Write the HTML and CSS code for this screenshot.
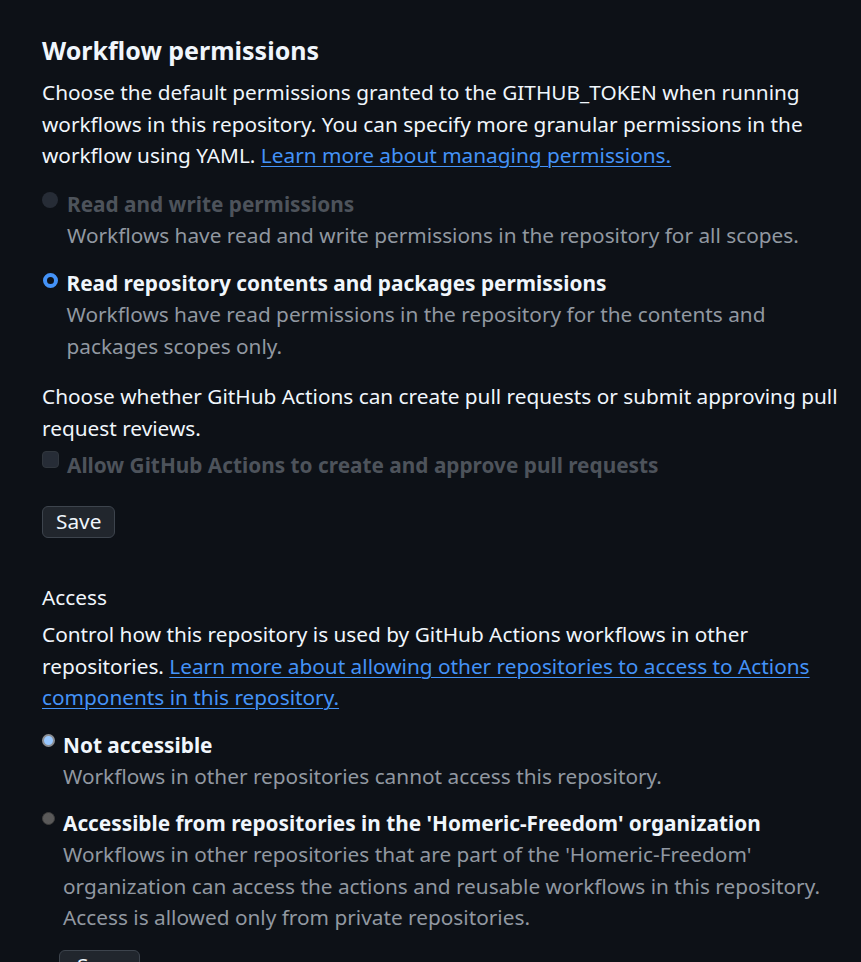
FILE: index.html
```html
<!DOCTYPE html>
<html lang="en">
<head>
<meta charset="utf-8">
<title>Workflow permissions</title>
<link rel="stylesheet" href="styles.css">
</head>
<body>
<main class="page">
  <h2 class="title">Workflow permissions</h2>
  <p class="text intro">Choose the default permissions granted to the GITHUB_TOKEN when running workflows in this repository. You can specify more granular permissions in the workflow using YAML. <a class="link" href="#">Learn more about managing permissions.</a></p>

  <div class="options">
    <div class="option">
      <span class="radio radio-disabled"></span>
      <div class="option-body">
        <div class="option-label is-disabled">Read and write permissions</div>
        <div class="option-desc">Workflows have read and write permissions in the repository for all scopes.</div>
      </div>
    </div>
    <div class="option option-next">
      <span class="radio radio-checked"></span>
      <div class="option-body">
        <div class="option-label">Read repository contents and packages permissions</div>
        <div class="option-desc">Workflows have read permissions in the repository for the contents and packages scopes only.</div>
      </div>
    </div>
  </div>

  <p class="text pr-text">Choose whether GitHub Actions can create pull requests or submit approving pull request reviews.</p>
  <div class="check-row">
    <span class="checkbox"></span>
    <span class="option-label is-disabled">Allow GitHub Actions to create and approve pull requests</span>
  </div>

  <button class="btn btn-first" type="button">Save</button>

  <h3 class="subhead">Access</h3>
  <p class="text access-text">Control how this repository is used by GitHub Actions workflows in other repositories. <a class="link" href="#">Learn more about allowing other repositories to access to Actions components in this repository.</a></p>

  <div class="access-options">
    <div class="aoption">
      <span class="nradio nradio-checked"></span>
      <div class="option-body">
        <div class="option-label">Not accessible</div>
        <div class="option-desc">Workflows in other repositories cannot access this repository.</div>
      </div>
    </div>
    <div class="aoption aoption-next">
      <span class="nradio nradio-off"></span>
      <div class="option-body">
        <div class="option-label">Accessible from repositories in the 'Homeric-Freedom' organization</div>
        <div class="option-desc">Workflows in other repositories that are part of the 'Homeric-Freedom' organization can access the actions and reusable workflows in this repository. Access is allowed only from private repositories.</div>
      </div>
    </div>
  </div>

  <button class="btn btn-second" type="button">Save</button>
</main>
</body>
</html>
```

FILE: styles.css
```css
html, body {
  margin: 0;
  padding: 0;
  background: #0d1117;
}

body {
  font-family: "Noto Sans", "Open Sans", "DejaVu Sans", sans-serif;
  font-size: 20.8px;
  line-height: 31.5px;
  color: #f0f6fc;
}

.page {
  padding: 32px 15px 0 42px;
  width: 804px;
}

.title {
  margin: 0;
  font-size: 25px;
  line-height: 36px;
  font-weight: 700;
  color: #f0f6fc;
}

.text {
  margin: 0;
}

.intro {
  margin-top: 9px;
}

.link {
  color: #4493f8;
  text-decoration: underline;
  text-underline-offset: 3px;
  text-decoration-thickness: 1px;
}

.options {
  margin-top: 17px;
}

.option {
  display: flex;
  align-items: flex-start;
  gap: 8px;
}

.option-next {
  margin-top: 16px;
}

.option-body {
  display: flex;
  flex-direction: column;
}

.option-label {
  font-weight: 700;
  color: #f0f6fc;
}

.option-label.is-disabled {
  color: #4d535b;
}

.option-desc {
  color: #9198a1;
}

.radio {
  flex: none;
  width: 16px;
  height: 16px;
  border-radius: 50%;
  box-sizing: border-box;
  margin-top: 3px;
}

.radio-disabled {
  background: #262c36;
  margin-right: 1px;
}

.radio-checked {
  width: 15px;
  height: 15px;
  margin-top: 5px;
  border: 4px solid #4493f8;
  background: #0d1117;
  margin-left: 0.5px;
  margin-right: 1px;
}

.pr-text {
  margin-top: 19px;
}

.check-row {
  display: flex;
  align-items: flex-start;
  gap: 8px;
  margin-top: 6px;
}

.checkbox {
  flex: none;
  width: 17px;
  height: 17px;
  box-sizing: border-box;
  margin-top: 1px;
  border-radius: 4px;
  background: #262c36;
  border: 1px solid #30363d;
}

.btn {
  display: block;
  box-sizing: border-box;
  height: 32px;
  padding: 0 13px;
  font-family: inherit;
  font-size: 20.8px;
  line-height: 29px;
  color: #f0f6fc;
  background: #21262d;
  border: 1px solid #3d444d;
  border-radius: 6px;
}

.btn-first {
  margin-top: 24px;
}

.subhead {
  margin: 44px 0 0;
  font-size: 20.8px;
  line-height: 31.5px;
  font-weight: 400;
  color: #f0f6fc;
}

.access-text {
  margin-top: 6px;
}

.access-options {
  margin-top: 16px;
}

.aoption {
  display: flex;
  align-items: flex-start;
  gap: 7px;
}

.aoption-next {
  margin-top: 15px;
}

.nradio {
  flex: none;
  width: 13px;
  height: 13px;
  border-radius: 50%;
  box-sizing: border-box;
  margin-left: 0;
  margin-top: 4px;
  margin-right: 1px;
}

.nradio-checked {
  background: #99c8ff;
  border: 2px solid #8c8f94;
}

.nradio-off {
  margin-top: 4px;
  background: #5a5a5a;
  border: 1px solid #3f3f3f;
}

.btn-second {
  margin-top: 16px;
  margin-left: 17px;
  padding: 0 17px;
}
```
